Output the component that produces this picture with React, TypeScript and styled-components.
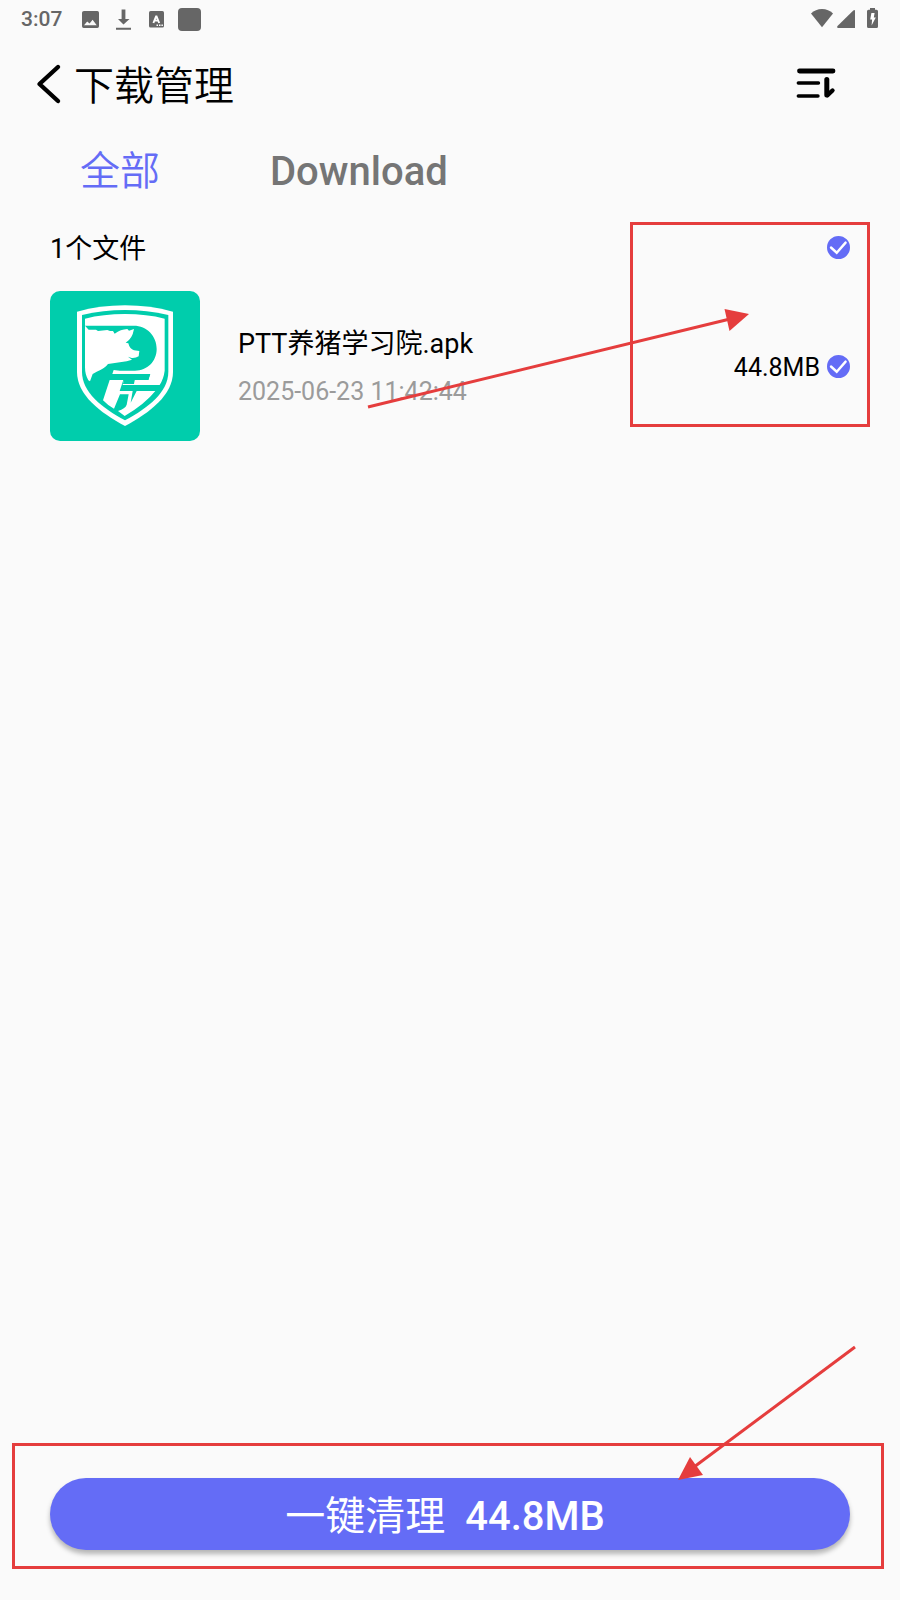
import React, { useState } from 'react';
import styled, { createGlobalStyle } from 'styled-components';

const accent = '#646cf6';
const markRed = '#e53d3d';

const GlobalStyle = createGlobalStyle`
  * { box-sizing: border-box; }
  body {
    margin: 0;
    background: #fafafa;
    color: #000;
    font-family: Roboto, "Noto Sans CJK SC", sans-serif;
  }
  button { font-family: inherit; border: 0; background: none; padding: 0; cursor: pointer; }
  svg { display: block; }
`;

const Screen = styled.div`
  min-height: 100vh;
  display: flex;
  flex-direction: column;
`;

const StatusBar = styled.div`
  display: flex;
  align-items: center;
  justify-content: space-between;
  height: 37px;
  padding: 0 20px 0 21px;
  color: #666;
`;

const StatusGroup = styled.div`
  display: flex;
  align-items: center;
`;

const Clock = styled.span`
  font-size: 21px;
  font-weight: 500;
  line-height: 24px;
  width: 57px;
`;

const Header = styled.header`
  display: flex;
  align-items: center;
  justify-content: space-between;
  height: 94px;
  padding: 0 62px 0 36px;
`;

const TitleGroup = styled.div`
  display: flex;
  align-items: center;
  gap: 10px;
`;

const Title = styled.h1`
  margin: 0;
  padding-top: 6px;
  font-size: 40px;
  font-weight: 350;
  line-height: 48px;
`;

const Tabs = styled.nav`
  display: flex;
  align-items: center;
  gap: 110px;
  height: 76px;
  padding: 5px 80px 0;
`;

const Tab = styled.button<{ $active: boolean }>`
  font-size: 40px;
  font-weight: ${(p) => (p.$active ? 350 : 500)};
  line-height: 48px;
  color: ${(p) => (p.$active ? accent : '#757575')};
`;

const FileSection = styled.main`
  position: relative;
  flex: 1;
  padding: 16px 50px 0;
`;

const SectionHead = styled.div`
  display: flex;
  align-items: center;
  justify-content: space-between;
  height: 48px;
`;

const Count = styled.h2`
  margin: 0;
  padding-top: 4px;
  font-size: 27px;
  font-weight: 400;
  line-height: 32px;
`;

const FileRow = styled.div`
  display: flex;
  align-items: center;
  margin-top: 20px;
`;

const Thumb = styled.div`
  width: 150px;
  height: 150px;
  border-radius: 10px;
  overflow: hidden;
  background: #00cdac;
`;

const FileText = styled.div`
  flex: 1;
  display: flex;
  flex-direction: column;
  gap: 16px;
  margin-left: 38px;
  padding-top: 4px;
`;

const FileName = styled.span`
  font-size: 27px;
  line-height: 32px;
`;

const FileDate = styled.time`
  font-size: 25px;
  line-height: 32px;
  color: #9b9b9b;
`;

const FileSize = styled.label`
  font-size: 25px;
  line-height: 32px;
  margin-right: 7px;
  padding-top: 4px;
`;

const CheckWrap = styled.span`
  position: relative;
  display: block;
  width: 23px;
  height: 23px;
`;

const CheckInput = styled.input`
  appearance: none;
  display: block;
  width: 23px;
  height: 23px;
  margin: 0;
  border: 2px solid #9b9b9b;
  border-radius: 50%;
  cursor: pointer;
  &:checked { background: ${accent}; border-color: ${accent}; }
`;

const CheckMark = styled.svg`
  position: absolute;
  inset: 0;
  pointer-events: none;
`;

const Footer = styled.footer`
  position: relative;
  padding: 32px 50px 50px;
`;

const CleanButton = styled.button`
  display: flex;
  align-items: center;
  justify-content: center;
  gap: 20px;
  width: 100%;
  height: 72px;
  padding: 6px 10px 0 0;
  border-radius: 36px;
  background: ${accent};
  color: #fff;
  font-size: 40px;
  line-height: 48px;
  box-shadow: 0 4px 5px rgba(0, 0, 0, 0.28);
`;

const CleanSize = styled.span`
  font-weight: 500;
`;

const ListFrame = styled.div`
  position: absolute;
  top: 15px;
  right: 30px;
  width: 240px;
  height: 205px;
  border: 3px solid ${markRed};
  pointer-events: none;
`;

const ListArrow = styled.svg`
  position: absolute;
  top: 93px;
  right: 140px;
  pointer-events: none;
`;

const FooterFrame = styled.div`
  position: absolute;
  inset: -3px 16px 31px 12px;
  border: 3px solid ${markRed};
  pointer-events: none;
`;

const FooterArrow = styled.svg`
  position: absolute;
  top: -108px;
  right: 40px;
  pointer-events: none;
`;

function Check({ id, label, checked, onChange }: {
  id: string; label: string; checked: boolean; onChange: (v: boolean) => void;
}) {
  return (
    <CheckWrap>
      <CheckInput id={id} type="checkbox" aria-label={label} checked={checked}
        onChange={(e) => onChange(e.target.checked)} />
      {checked && (
        <CheckMark width="23" height="23" viewBox="0 0 23 23" fill="none" aria-hidden="true">
          <path d="M4 11.5 9.7 16.7 18.6 6.6" stroke="#fff" strokeWidth="2.4" strokeLinecap="round" />
        </CheckMark>
      )}
    </CheckWrap>
  );
}

function NoticeIcons() {
  return (
    <svg width="124" height="24" viewBox="78 6 124 24" fill="#666" aria-hidden="true">
      <path fillRule="evenodd" d="M84 10H97.3Q99 10 99 11.7V25.3Q99 27 97.3 27H83.7Q82 27 82 25.3V11.7Q82 10 84 10ZM84 24.3H96.7L92.6 18.8 89.6 22.5 87.2 20.4Z" />
      <path d="M121.6 8.5H125.4V18H129.5L123.5 23.5 118 18H121.6ZM116 26.8H131V28.8H116Z" />
      <rect x="149" y="10" width="15" height="16.5" rx="1.6" />
      <path d="M153.4 22 156.3 14.8 159.2 22M154.6 19.6H158" fill="none" stroke="#fff" strokeWidth="1.9" strokeLinejoin="bevel" />
      <path d="M156.5 23.6H158V25.1H156.5ZM159 23.6H160.5V25.1H159ZM161.4 23.6H162.9V25.1H161.4Z" fill="#fff" />
      <rect x="178" y="7" width="23" height="23" rx="4" />
    </svg>
  );
}

function SystemIcons() {
  return (
    <svg width="69" height="24" viewBox="811 6 69 24" fill="#666" aria-hidden="true">
      <path d="M811 12.5Q815.5 8 822 8T833 12.5L822 26.3Z" />
      <path d="M855 9.5V27H838Q836.2 26.6 837.5 25L853.3 9.6Q854.5 8.7 855 9.5Z" />
      <path d="M870 7H875V8.8H876.5Q878 8.8 878 10.3V25.5Q878 27 876.5 27H868.5Q867 27 867 25.5V10.3Q867 8.8 868.5 8.8H870Z" />
      <path d="M871.4 12H874.6L873.8 16.4H875.8L871.6 24.5 872.1 18.6H870.2Z" fill="#fff" />
    </svg>
  );
}

function ShieldLogo() {
  return (
    <svg width="150" height="150" viewBox="30 33 450 450" role="img" aria-label="PTT">
      <path fill="#fff" d="M111 95Q180 76 255 76T399 95V275C399 345 330 397 255 438 180 397 111 345 111 275Z" />
      <path fill="#00cdac" d="M126 105Q190 90 255 90T385 105V275C385 336 325 383 255 421 185 383 126 336 126 275Z" />
      <path fill="#fff" d="M135 116Q190 102 255 102T374 116V272Q371 296 359 315H248L250 304 279 312H282L284 300H325L331 282H217L221 270 240 272H285C322 272 350 244 350 207 350 168 321 137 281 137H135Z" />
      <path fill="#fff" d="M135 137 146 149 168 149 174 153 202 150 210 153H219L224 161Q242 148 262 147L267 152 282 147Q277 177 257 188L265 190Q269 207 282 211L298 213 296 229Q287 235 275 234L264 230 276 239 260 244 204 252Q194 266 170 275L158 282 150 304 145 301Q135 284 135 262Z" />
      <path fill="#00cdac" d="M215 283H330L325 300H283L281 312H249L251 301H211Z" />
      <path fill="#fff" d="M209 300H250L239 333H278L272 368 290 333H346Q315 372 254 408L234 393Q256 386 260 374L266 343H240L222 386Q203 376 189 361Z" />
    </svg>
  );
}

export default function App() {
  const [tab, setTab] = useState('全部');
  const [picked, setPicked] = useState(true);

  return (
    <>
      <GlobalStyle />
      <Screen>
        <StatusBar>
          <StatusGroup>
            <Clock>3:07</Clock>
            <NoticeIcons />
          </StatusGroup>
          <SystemIcons />
        </StatusBar>

        <Header>
          <TitleGroup>
            <button type="button" aria-label="返回">
              <svg width="28" height="42" viewBox="0 0 28 42" fill="none" aria-hidden="true">
                <path d="M22 4 3.5 21 22 38" stroke="#000" strokeWidth="4.4" strokeLinecap="round" strokeLinejoin="round" />
              </svg>
            </button>
            <Title>下载管理</Title>
          </TitleGroup>
          <button type="button" aria-label="排序">
            <svg width="42" height="32" viewBox="796 68 42 32" fill="none" stroke="#000" strokeLinecap="round" strokeLinejoin="round" aria-hidden="true">
              <path d="M799.5 71H833" strokeWidth="4.8" />
              <path d="M798.3 83H818.5M798.3 96H818" strokeWidth="3.4" />
              <path d="M826.8 79.5V95" strokeWidth="5" />
              <path d="M827.5 95.2 832.5 90.5" strokeWidth="4.4" />
            </svg>
          </button>
        </Header>

        <Tabs>
          {['全部', 'Download'].map((name) => (
            <Tab key={name} type="button" $active={tab === name} onClick={() => setTab(name)}>{name}</Tab>
          ))}
        </Tabs>

        <FileSection>
          <SectionHead>
            <Count>1个文件</Count>
            <Check id="all" label="全选" checked={picked} onChange={setPicked} />
          </SectionHead>
          <FileRow>
            <Thumb><ShieldLogo /></Thumb>
            <FileText>
              <FileName>PTT养猪学习院.apk</FileName>
              <FileDate dateTime="2025-06-23T11:42:44">2025-06-23 11:42:44</FileDate>
            </FileText>
            <FileSize htmlFor="file">44.8MB</FileSize>
            <Check id="file" label="PTT养猪学习院.apk" checked={picked} onChange={setPicked} />
          </FileRow>
          <ListFrame />
          <ListArrow width="394" height="116" viewBox="366 300 394 116" aria-hidden="true">
            <path d="M368 407 730 319" stroke={markRed} strokeWidth="3" />
            <path d="M749 314 724.5 309 729.5 331Z" fill={markRed} />
          </ListArrow>
        </FileSection>

        <Footer>
          <CleanButton type="button">
            <span>一键清理</span>
            <CleanSize>44.8MB</CleanSize>
          </CleanButton>
          <FooterFrame />
          <FooterArrow width="190" height="150" viewBox="670 1338 190 150" aria-hidden="true">
            <path d="M855 1347 694 1467" stroke={markRed} strokeWidth="3" />
            <path d="M678 1480 690 1457 703 1475Z" fill={markRed} />
          </FooterArrow>
        </Footer>
      </Screen>
    </>
  );
}
